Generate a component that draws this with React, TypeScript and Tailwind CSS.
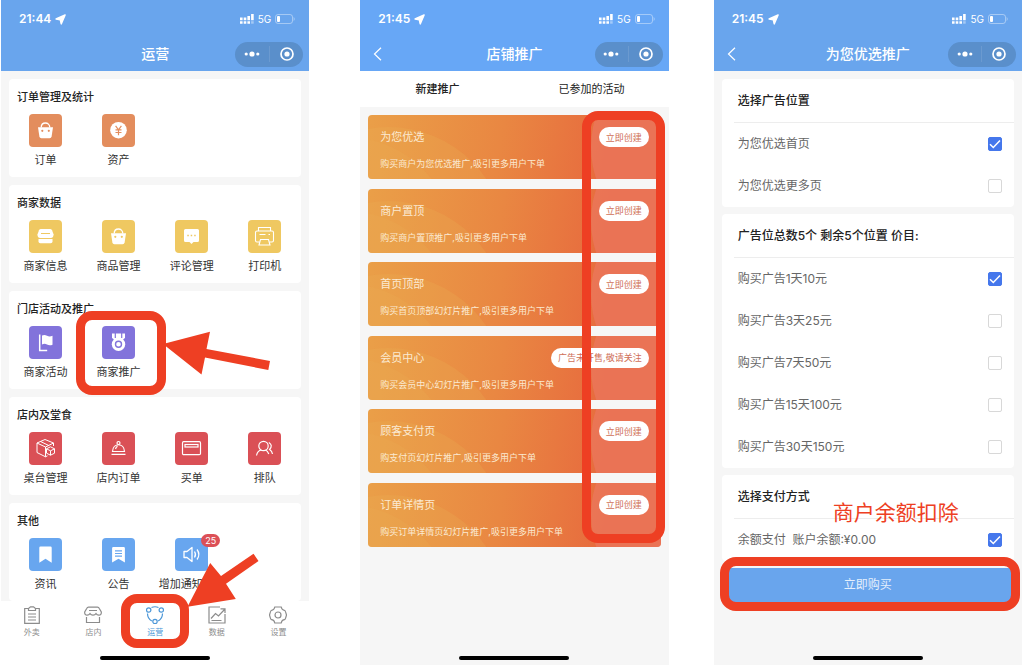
import { ReactNode } from "react";

const RING = "pointer-events-none absolute z-20 border-[#ee3f23]";

function LocationArrow() {
  return (
    <svg viewBox="0 0 12 12" className="ml-1 size-[11px]" fill="white">
      <path d="M11 1 6.8 10.800 5.800 6.400 1.200 5.400z" stroke="white" strokeWidth="1.600" strokeLinejoin="round" />
    </svg>
  );
}

function StatusBar(props: { time: string }) {
  return (
    <div className="flex h-[38px] items-center justify-between pl-[18px] pr-[14px] text-white">
      <div className="flex items-center text-xs font-semibold">
        {props.time}
        <LocationArrow />
      </div>
      <div className="flex items-center gap-1 text-[10px]">
        <svg viewBox="0 0 14 10" className="h-[10px] w-[14px]" fill="white">
          <path d="M0 3.500h2.600v2.800H0zM3.700 3.500h2.600v2.800H3.700zM7.400 2h2.600v4.300H7.400zM11.100 0h2.600v6.300h-2.600z" />
          <path d="M0 7.200h2.600v2.500H0zM3.700 7.200h2.600v2.500H3.700zM7.400 7.200h2.600v2.500H7.400z" />
          <path d="M11.100 7.200h2.600v2.500h-2.600z" opacity="0.4" />
        </svg>
        5G
        <svg viewBox="0 0 20 10" className="h-[10px] w-5" fill="none">
          <rect x="0.5" y="0.5" width="17" height="9" rx="2.5" stroke="white" strokeOpacity="0.4" />
          <rect x="2" y="2" width="3" height="6" rx="1" fill="white" />
          <path d="M18.8 3.5q1 1.5 0 3" stroke="white" strokeOpacity="0.4" />
        </svg>
      </div>
    </div>
  );
}

function Header(props: { time: string; title: string; back?: boolean; className: string }) {
  return (
    <header className={props.className}>
      <StatusBar time={props.time} />
      <div className="grid h-[33px] grid-cols-[1fr_auto_1fr] items-center pb-px pr-[6px] text-white">
        <div>
          {props.back && (
            <button aria-label="返回" className="block pl-[13px]">
              <svg viewBox="0 0 9 14" className="h-[14px] w-[9px]" fill="none" stroke="white" strokeWidth="1.2">
                <path d="M8 .8 1.5 7 8 13.2" />
              </svg>
            </button>
          )}
        </div>
        <h1 className="pl-[6px] text-sm font-medium">{props.title}</h1>
        <div className="flex h-[25px] w-[68px] items-center justify-self-end rounded-full bg-[#5a8fcb]">
          <button aria-label="更多" className="flex h-4 flex-1 items-center justify-center border-r border-white/10">
            <svg viewBox="0 0 16 6" className="h-[6px] w-4" fill="white">
              <circle cx="2.2" cy="3" r="1.6" />
              <circle cx="8" cy="3" r="2.6" />
              <circle cx="13.8" cy="3" r="1.6" />
            </svg>
          </button>
          <button aria-label="关闭" className="flex flex-1 justify-center">
            <svg viewBox="0 0 14 14" className="size-[14px]" fill="none">
              <circle cx="7" cy="7" r="6" stroke="white" strokeWidth="1.7" />
              <circle cx="7" cy="7" r="2.6" fill="white" />
            </svg>
          </button>
        </div>
      </div>
    </header>
  );
}

function HomeIndicator() {
  return <div className="mx-auto mb-[5px] h-1 w-[110px] rounded-full bg-black" />;
}

// tile glyphs, drawn in white; currentColor is the tile colour
const glyphs: Record<string, ReactNode> = {
  bag: (
    <>
      <path d="M9 13.2h15l-1.4 9.2q-.3 1.8-2 1.8h-8.200q-1.700 0-2-1.800z" fill="white" />
      <path d="M12.200 13.500c0-6 8.600-6 8.600 0" stroke="white" strokeWidth="1.300" />
      <circle cx="13.300" cy="16.800" r="1.100" fill="currentColor" />
      <circle cx="19.800" cy="16.800" r="1.100" fill="currentColor" />
    </>
  ),
  yen: (
    <>
      <circle cx="16.5" cy="16.200" r="8.300" fill="white" />
      <path
        d="m13.600 11.800 2.900 4 2.900-4M16.500 15.800v5.400M13.500 15.800h6M13.500 18.500h6"
        stroke="currentColor"
        strokeWidth="1.200"
      />
    </>
  ),
  shop: (
    <>
      <path d="M12 9h9q1.500 0 2 1.300l1.500 4q.3 3.700-2.800 3.700H11.300Q8.200 18 8.500 14.300l1.500-4Q10.500 9 12 9z" fill="white" />
      <path d="M9.500 19h14v2.500q0 1.800-1.800 1.800H11.300q-1.800 0-1.800-1.800z" fill="white" />
      <path d="M12 13.500h9" stroke="currentColor" strokeWidth="1" />
    </>
  ),
  comment: (
    <>
      <path d="M10.500 9h12q1.500 0 1.500 1.500v10q0 1.500-1.500 1.500h-4l-2 2-2-2h-4Q9 22 9 20.500v-10Q9 9 10.500 9z" fill="white" />
      <path d="M12.300 15.500h1.500M15.700 15.500h1.500M19.200 15.500h1.500" stroke="currentColor" strokeWidth="1.300" />
    </>
  ),
  printer: (
    <g stroke="white" strokeWidth="1.100">
      <path d="M10.500 11V7.500h12V11M11.500 22H9q-1.500 0-1.500-1.500v-8Q7.500 11 9 11h15q1.500 0 1.500 1.500v8q0 1.500-1.500 1.500h-2.500" />
      <path d="M12.500 19.500h8l1.500 5.500H11zM11.500 14.500h6M20.500 14.500h1.500" />
    </g>
  ),
  flag: (
    <>
      <path d="M10.700 8.500v16h7.500" stroke="white" strokeWidth="1.500" />
      <path d="M13 9.500q2.500-1.300 5 .2t5.500 0v9q-3 1.300-5.500-.2t-5 0z" fill="white" />
    </>
  ),
  medal: (
    <>
      <path d="M10 7.500h13v4.500l-3.500 2.500h-6L10 12z" fill="white" />
      <path d="M13.300 7v5M19.700 7v5" stroke="currentColor" strokeWidth="1.200" />
      <circle cx="16.500" cy="18.300" r="6.700" fill="white" />
      <circle cx="16.500" cy="18.300" r="3" stroke="currentColor" strokeWidth="1.400" />
    </>
  ),
  box: (
    <g stroke="white" strokeWidth="1" strokeLinejoin="round">
      <path d="m8 11 8-3.500 8.500 3.500-8 4zM8 11v9.500l8.500 4.300V15M24.500 11v3M11.500 9.500l8.300 4M16.500 24.800l2-1" />
      <path d="m21.500 14.800 4 2v4.400l-4 2-4-2v-4.400zM17.500 16.800l4 2 4-2M21.500 18.800v4.400" />
    </g>
  ),
  cloche: (
    <g stroke="white" strokeWidth="1.200">
      <path d="M10.500 19.500c.5-9 11.500-9 12 0zM9.500 22.300h14M13.500 17q.5-2 2-2.800" />
      <circle cx="16.500" cy="11" r="1.500" />
    </g>
  ),
  card: (
    <g stroke="white" strokeWidth="1.200">
      <rect x="7.500" y="9.700" width="18" height="13" rx="1.200" />
      <rect x="10" y="12.500" width="13" height="2.500" />
    </g>
  ),
  people: (
    <g stroke="white" strokeWidth="1.200">
      <circle cx="15.500" cy="14" r="4.700" />
      <path d="M8.500 23.500q1-5 5-5.500M17.500 18q2 .7 3.300 4M20.800 10.500q4.500 2.700.8 7 2.500 1.500 2.900 4.500" />
    </g>
  ),
  bookmark: <path d="M11.500 8.500h10q1.200 0 1.200 1.200v15l-6.200-4-6.200 4v-15q0-1.200 1.200-1.200z" fill="white" />,
  notice: (
    <>
      <path d="M11.300 9h10.400q1.200 0 1.200 1.200v14.300l-6.400-3.700-6.400 3.700V10.200Q10.100 9 11.300 9z" fill="white" />
      <path d="M13 12.800h7M13 15.500h7M13 18.200h7" stroke="currentColor" strokeWidth="1.200" />
    </>
  ),
  speaker: (
    <g stroke="white" strokeWidth="1.300" strokeLinejoin="round">
      <path d="M9 13.500h3l5-4v14l-5-4H9z" />
      <path d="M19.500 13.500q2 3 0 6M22 11.500q3.700 5 0 10" />
    </g>
  ),
};

type Entry = { icon: string; label: string; badge?: string; ring?: boolean };

const sections: { title: string; color: string; items: Entry[] }[] = [
  {
    title: "订单管理及统计",
    color: "text-[#e38d5d]",
    items: [
      { icon: "bag", label: "订单" },
      { icon: "yen", label: "资产" },
    ],
  },
  {
    title: "商家数据",
    color: "text-[#efc861]",
    items: [
      { icon: "shop", label: "商家信息" },
      { icon: "bag", label: "商品管理" },
      { icon: "comment", label: "评论管理" },
      { icon: "printer", label: "打印机" },
    ],
  },
  {
    title: "门店活动及推广",
    color: "text-[#8273db]",
    items: [
      { icon: "flag", label: "商家活动" },
      { icon: "medal", label: "商家推广", ring: true },
    ],
  },
  {
    title: "店内及堂食",
    color: "text-[#da5056]",
    items: [
      { icon: "box", label: "桌台管理" },
      { icon: "cloche", label: "店内订单" },
      { icon: "card", label: "买单" },
      { icon: "people", label: "排队" },
    ],
  },
  {
    title: "其他",
    color: "text-[#68a6ef]",
    items: [
      { icon: "bookmark", label: "资讯" },
      { icon: "notice", label: "公告" },
      { icon: "speaker", label: "增加通知次数", badge: "25" },
    ],
  },
];

function Tile(props: { item: Entry; color: string }) {
  const { item, color } = props;
  return (
    <div className="relative">
      <button className="flex w-full flex-col items-center">
        <span className={color + " relative block size-[33px] rounded-[4px] bg-current"}>
          <svg viewBox="0 0 33 33" className="size-[33px]" fill="none">
            {glyphs[item.icon]}
          </svg>
          {item.badge && (
            <span className="absolute -right-3 -top-1 rounded-full bg-[#dc5057] px-1 text-[9px] leading-[13px] text-white">
              {item.badge}
            </span>
          )}
        </span>
        <span className="h-[26px] whitespace-nowrap text-[11px] leading-[27px] text-[#333]">{item.label}</span>
      </button>
      {item.ring && (
        <>
          <div className={RING + " -bottom-[10px] -left-[6px] -right-[11px] -top-[15px] rounded-2xl border-[9px]"} />
          <svg
            viewBox="0 0 108 44"
            className="pointer-events-none absolute left-20 top-[5px] z-20 h-[44px] w-[108px]"
            fill="#ee3f23"
          >
            <path d="M1 13 48 .7 44.500 18l63.500 12-1.700 9L43 26.500 39.500 43.500z" />
          </svg>
        </>
      )}
    </div>
  );
}

const tabs = [
  {
    label: "外卖",
    icon: (
      <>
        <path d="M5.500 2.500H1.700v14.800h14.600V2.500h-3.800M5.500 4.500v-2L7.500.9h3l2 1.600v2z" />
        <path d="M5 8h8M5 11h8M5 14h8" />
      </>
    ),
  },
  {
    label: "店内",
    icon: (
      <>
        <path d="M4.500 1.200h9q1.200 0 1.800 1.300L17.300 6q.3 3.200-2.500 3.200-1.800 0-2.800-1.500-1 1.500-3 1.500T6 7.700Q5 9.200 3.200 9.200.4 9.200.7 6l2-3.500q.6-1.300 1.800-1.300z" />
        <path d="M2.500 11v5.500h13V11M5 4.500h8" />
      </>
    ),
  },
  {
    label: "运营",
    active: true,
    icon: (
      <>
        <circle cx="2.700" cy="4" r="2.200" />
        <circle cx="15.300" cy="4" r="2.200" />
        <circle cx="9" cy="15.500" r="2.200" />
        <path d="M5.500 1.500q3.500-1.500 7 0M1.500 7.500q0 5 4.300 7.500M16.500 7.500q0 5-4.300 7.500" />
      </>
    ),
  },
  {
    label: "数据",
    icon: (
      <>
        <path d="M12 1H1v16h16V8" />
        <path d="m3 12.500 4.500-5 3 2.500L17 3M12.500 2.800H17v4.200M3.500 14.500h10" />
      </>
    ),
  },
  {
    label: "设置",
    icon: (
      <>
        <path d="M5.800 1h6.400q.6 3 3.300 3.300.8 0 2 4.700-1.200 4.700-2 4.700-2.700.3-3.300 3.300H5.800q-.6-3-3.300-3.300-.8 0-2-4.700 1.200-4.700 2-4.700Q5.200 4 5.800 1z" />
        <circle cx="9" cy="9" r="3" />
      </>
    ),
  },
];

function OperationsScreen() {
  return (
    <section className="relative mr-[51px] flex min-h-screen min-w-0 flex-1 flex-col bg-[#f6f6f6]">
      <Header time="21:44" title="运营" className="bg-[#69a5ed]" />
      <main className="flex flex-1 flex-col gap-2 px-2 pt-2">
        {sections.map((section) => (
          <div key={section.title} className="rounded-[4px] bg-white pb-1">
            <h2 className="h-[35px] pl-2 text-[11px] font-medium leading-[37px] text-[#222]">{section.title}</h2>
            <div className="grid grid-cols-4">
              {section.items.map((item) => (
                <Tile key={item.label} item={item} color={section.color} />
              ))}
            </div>
          </div>
        ))}
      </main>
      <nav className="grid grid-cols-5 bg-white pb-4 pt-[5px]">
        {tabs.map((tab) => (
          <div key={tab.label} className="relative">
            <button
              className={
                "flex w-full flex-col items-center text-[8px] leading-[16px] " +
                (tab.active ? "text-[#4c97d8]" : "text-[#8c8c8c]")
              }
            >
              <svg viewBox="0 0 18 18" className="size-[18px]" fill="none" stroke="currentColor" strokeWidth="1.200">
                {tab.icon}
              </svg>
              {tab.label}
            </button>
            {tab.active && (
              <>
                <div className={RING + " -bottom-[8px] -left-[3px] -right-[3px] -top-[12px] rounded-2xl border-[9px]"} />
                <svg
                  viewBox="0 0 73 54"
                  className="pointer-events-none absolute bottom-[33px] left-[63px] z-20 h-[54px] w-[73px]"
                  fill="#ee3f23"
                >
                  <path d="M.5 53.700 23.200 10 34 23 66.500.7 71.500 8 39 30.700 48.800 46z" />
                </svg>
              </>
            )}
          </div>
        ))}
      </nav>
      <div className="bg-white">
        <HomeIndicator />
      </div>
    </section>
  );
}

const promotions = [
  { title: "为您优选", desc: "购买商户为您优选推广,吸引更多用户下单", action: "立即创建" },
  { title: "商户置顶", desc: "购买商户置顶推广,吸引更多用户下单", action: "立即创建" },
  { title: "首页顶部", desc: "购买首页顶部幻灯片推广,吸引更多用户下单", action: "立即创建" },
  { title: "会员中心", desc: "购买会员中心幻灯片推广,吸引更多用户下单", action: "广告未开售,敬请关注" },
  { title: "顾客支付页", desc: "购支付页幻灯片推广,吸引更多用户下单", action: "立即创建" },
  { title: "订单详情页", desc: "购买订单详情页幻灯片推广,吸引更多用户下单", action: "立即创建" },
];

function PromotionScreen() {
  return (
    <section className="mr-[45px] flex min-h-screen min-w-0 flex-1 flex-col bg-[#f6f6f6]">
      <Header time="21:45" title="店铺推广" back className="bg-[#67a7f6]" />
      <div className="grid h-9 grid-cols-2 bg-white text-[11px] text-[#222]">
        <button className="font-medium">新建推广</button>
        <button>已参加的活动</button>
      </div>
      <main className="flex-1 px-2 pt-2">
        <div className="relative">
          <ul className="flex min-h-[432px] flex-col justify-between">
            {promotions.map((promo) => (
              <li
                key={promo.title}
                className="relative h-16 overflow-hidden rounded-[4px] bg-linear-100 from-[#ea9f48] via-[#e98742] via-45% to-[#e76b3e] to-80%"
              >
                <div className="absolute -left-[99px] top-[12px] size-[238px] rounded-full bg-[#ebb055]/25" />
                <div className="absolute -left-[130px] top-[22px] size-[216px] rounded-full bg-[#ebb055]/20" />
                <div className="absolute -right-[130px] -top-[68px] size-[200px] rounded-full bg-[#ee7c6c]/50" />
                <div className="relative flex justify-between px-3 pt-3">
                  <h2 className="text-[11px] leading-5 text-[#fbead2]">{promo.title}</h2>
                  <button className="h-5 rounded-full bg-white px-[7px] text-[9px] leading-[19px] text-[#cf6f58]">
                    {promo.action}
                  </button>
                </div>
                <p className="relative pl-3 pt-[7px] text-[9px] leading-5 text-[#fbead2]">{promo.desc}</p>
              </li>
            ))}
          </ul>
          <div className={RING + " -right-1 -top-1 bottom-1 w-[83px] rounded-2xl border-[9px]"} />
        </div>
      </main>
      <HomeIndicator />
    </section>
  );
}

function CheckRow(props: { label: string; checked?: boolean }) {
  return (
    <label className="flex h-[42px] items-center justify-between pl-4 pr-3 text-xs text-[#666]">
      <span className="whitespace-pre">{props.label}</span>
      <span className="grid *:col-start-1 *:row-start-1">
        <input
          type="checkbox"
          defaultChecked={props.checked}
          className="peer size-[14px] appearance-none rounded-[2px] border border-[#d8d8d8] bg-white checked:border-[#4577ec] checked:bg-[#4577ec]"
        />
        <svg
          viewBox="0 0 14 14"
          className="pointer-events-none invisible size-[14px] peer-checked:visible"
          fill="none"
          stroke="white"
          strokeWidth="1.500"
        >
          <path d="m2 7.200 3.300 3.300 6.700-7" />
        </svg>
      </span>
    </label>
  );
}

function OptionCard(props: { title: string; children: ReactNode }) {
  return (
    <div className="relative rounded-[4px] bg-white">
      <h2 className="ml-3 h-11 border-b border-[#ededed] pl-1 text-xs font-medium leading-[43px] text-[#222]">
        {props.title}
      </h2>
      {props.children}
    </div>
  );
}

function PurchaseScreen() {
  return (
    <section className="flex min-h-screen min-w-0 flex-1 flex-col bg-[#f6f6f6]">
      <Header time="21:45" title="为您优选推广" back className="bg-[#69a5ed]" />
      <main className="flex flex-1 flex-col gap-[7px] px-2 pt-2">
        <OptionCard title="选择广告位置">
          <CheckRow label="为您优选首页" checked />
          <CheckRow label="为您优选更多页" />
        </OptionCard>
        <OptionCard title="广告位总数5个 剩余5个位置 价目:">
          <CheckRow label="购买广告1天10元" checked />
          <CheckRow label="购买广告3天25元" />
          <CheckRow label="购买广告7天50元" />
          <CheckRow label="购买广告15天100元" />
          <CheckRow label="购买广告30天150元" />
        </OptionCard>
        <OptionCard title="选择支付方式">
          <CheckRow label="余额支付  账户余额:¥0.00" checked />
          <p className="absolute left-[111px] top-6 text-[21px] leading-7 text-[#ee3f23]">商户余额扣除</p>
        </OptionCard>
        <div className="relative">
          <button className="block h-[34px] w-full bg-[#69a5ed] text-xs text-[#e4effc]">立即购买</button>
          <div className={RING + " -bottom-[9px] -left-[2px] -right-[6px] -top-[11px] rounded-2xl border-[9px]"} />
        </div>
      </main>
      <HomeIndicator />
    </section>
  );
}

export default function App() {
  return (
    <div className="flex bg-white pl-px pr-[2px] font-[Inter,'Noto_Sans_CJK_SC',sans-serif]">
      <OperationsScreen />
      <PromotionScreen />
      <PurchaseScreen />
    </div>
  );
}
